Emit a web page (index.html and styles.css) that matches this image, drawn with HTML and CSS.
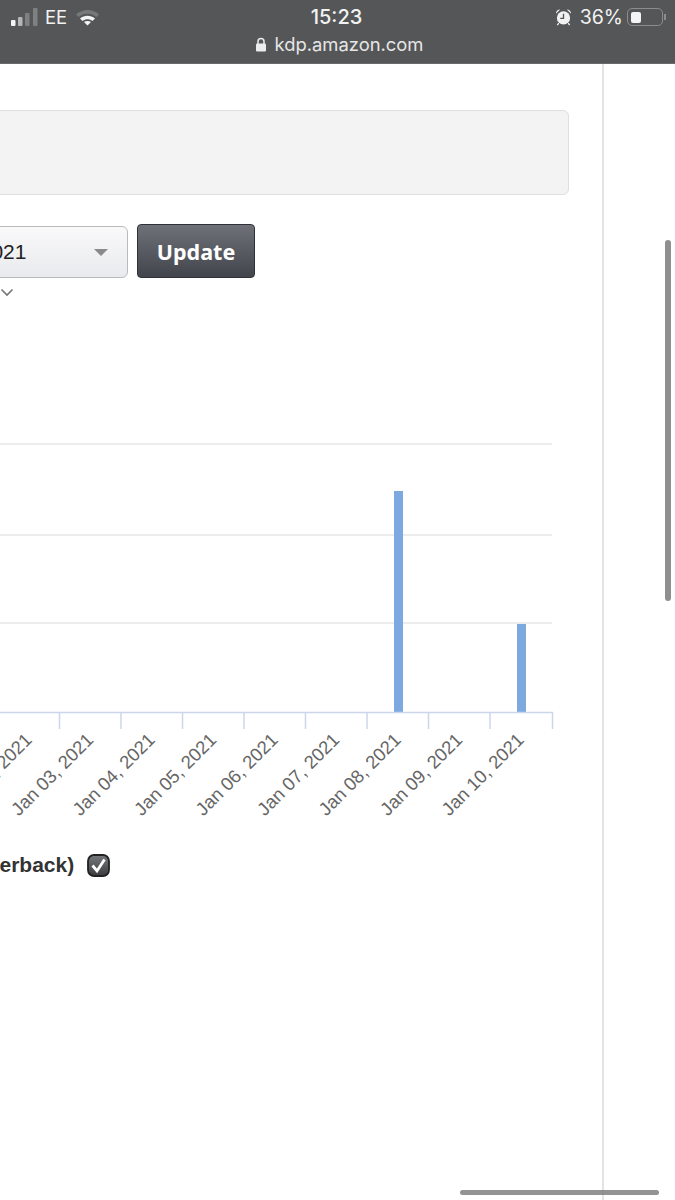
FILE: index.html
```html
<!DOCTYPE html>
<html lang="en">
<head>
  <meta charset="UTF-8">
  <title>kdp.amazon.com</title>
  <link rel="stylesheet" href="styles.css">
</head>
<body>
  <header class="status-bar">
    <div class="status-row">
      <div class="status-left">
        <svg class="signal" width="29" height="18" viewBox="0 0 29 18">
          <rect x="1" y="12" width="4.500" height="6" rx="1" fill="#f4f4f4"/>
          <rect x="8" y="9" width="4.500" height="9" rx="1" fill="#b5b6b7"/>
          <rect x="15" y="5" width="4.500" height="13" rx="1" fill="#7f8082"/>
          <rect x="23" y="0" width="4.500" height="18" rx="1" fill="#7f8082"/>
        </svg>
        <span class="carrier">EE</span>
        <svg class="wifi" width="25" height="18" viewBox="0 0 25 18">
          <path d="M1 6.500C7.500 0.500 17.500 0.500 24 6.500L21.500 9C16.500 4.500 8.500 4.500 3.500 9Z" fill="#77787a"/>
          <path d="M5 10.500C9.500 6.700 15.500 6.700 20 10.500L17.500 13C14.300 10.500 10.700 10.500 7.500 13Z" fill="#f4f4f4"/>
          <path d="M9 14C11 12.500 14 12.500 16 14L12.500 17.500Z" fill="#f4f4f4"/>
        </svg>
      </div>
      <div class="clock">15:23</div>
      <div class="status-right">
        <svg class="alarm" width="17" height="18" viewBox="0 0 18 18">
          <circle cx="9" cy="10" r="7" fill="#f2f2f2"/>
          <path d="M1 5.500C1 2.500 3 1 5.500 1Z M17 5.500C17 2.500 15 1 12.500 1Z" fill="#f2f2f2"/>
          <path d="M9 5.500V10.500H5.500" fill="none" stroke="#555" stroke-width="1.400"/>
          <path d="M4 15.500L2.500 17.500M14 15.500L15.500 17.500" stroke="#f2f2f2" stroke-width="1.400"/>
        </svg>
        <span class="battery-text">36%</span>
        <div class="battery">
          <div class="battery-level"></div>
        </div>
        <div class="battery-cap"></div>
      </div>
    </div>
    <div class="url-row">
      <svg class="lock" width="12" height="15" viewBox="0 0 12 15">
        <path d="M3 7V4.500a3 3 0 0 1 6 0V7" fill="none" stroke="#ececec" stroke-width="1.500"/>
        <rect x="1" y="6.500" width="10" height="8" rx="1.300" fill="#ececec"/>
      </svg>
      <span>kdp.amazon.com</span>
    </div>
  </header>

  <div class="page">
    <main class="content">
      <div class="filter-panel"></div>

      <div class="filter-row">
        <div class="date-select">
          <span>Jan 10, 2021</span>
          <i class="select-arrow"></i>
        </div>
        <button class="update-btn">Update</button>
      </div>

      <svg class="chevron" width="14" height="9" viewBox="0 0 14 9">
        <path d="M1.500 1.500L7 7L12.500 1.500" fill="none" stroke="#777" stroke-width="1.600"/>
      </svg>

      <svg class="chart" width="602" height="400" viewBox="0 430 602 400">
        <g class="grid">
          <line x1="0" y1="444" x2="552" y2="444"/>
          <line x1="0" y1="535" x2="552" y2="535"/>
          <line x1="0" y1="623" x2="552" y2="623"/>
        </g>
        <rect class="bar" x="394" y="491" width="9" height="221"/>
        <rect class="bar" x="517" y="624" width="9" height="88"/>
        <g class="axis">
          <line x1="0" y1="712.500" x2="553" y2="712.500"/>
          <line x1="59.500" y1="712" x2="59.500" y2="729"/>
          <line x1="121" y1="712" x2="121" y2="729"/>
          <line x1="182.500" y1="712" x2="182.500" y2="729"/>
          <line x1="244" y1="712" x2="244" y2="729"/>
          <line x1="305.500" y1="712" x2="305.500" y2="729"/>
          <line x1="367" y1="712" x2="367" y2="729"/>
          <line x1="428.500" y1="712" x2="428.500" y2="729"/>
          <line x1="490" y1="712" x2="490" y2="729"/>
          <line x1="552.500" y1="712" x2="552.500" y2="729"/>
        </g>
        <g class="tick-labels">
          <text transform="rotate(-45 33 741)" x="33" y="741">Jan 02, 2021</text>
          <text transform="rotate(-45 94.500 741)" x="94.500" y="741">Jan 03, 2021</text>
          <text transform="rotate(-45 156 741)" x="156" y="741">Jan 04, 2021</text>
          <text transform="rotate(-45 217.500 741)" x="217.500" y="741">Jan 05, 2021</text>
          <text transform="rotate(-45 279 741)" x="279" y="741">Jan 06, 2021</text>
          <text transform="rotate(-45 340.500 741)" x="340.500" y="741">Jan 07, 2021</text>
          <text transform="rotate(-45 402 741)" x="402" y="741">Jan 08, 2021</text>
          <text transform="rotate(-45 463.500 741)" x="463.500" y="741">Jan 09, 2021</text>
          <text transform="rotate(-45 525 741)" x="525" y="741">Jan 10, 2021</text>
        </g>
      </svg>

      <div class="legend">
        <span>(Paperback)</span>
        <svg class="check" width="23" height="23" viewBox="0 0 23 23">
          <defs>
            <linearGradient id="checkFill" x1="0" y1="0" x2="0" y2="1">
              <stop offset="0" stop-color="#77797c"/>
              <stop offset="1" stop-color="#3a3c3f"/>
            </linearGradient>
          </defs>
          <rect x="1" y="1" width="21" height="21" rx="6" fill="url(#checkFill)" stroke="#222" stroke-width="1.800"/>
          <path d="M5.500 11.500L10 17L17.500 5.500" fill="none" stroke="#fff" stroke-width="2.800"/>
        </svg>
      </div>
    </main>
    <aside class="side"></aside>
  </div>

  <div class="scroll-v"></div>
  <div class="scroll-h"></div>
</body>
</html>
```

FILE: styles.css
```css
html, body {
  margin: 0;
  padding: 0;
  height: 1200px;
  overflow: hidden;
  background: #fff;
  font-family: "Liberation Sans", Arial, sans-serif;
}

body {
  position: relative;
  display: flex;
  flex-direction: column;
}

/* Phone status bar */
.status-bar {
  height: 63px;
  flex: none;
  background: #555657;
  border-bottom: 1px solid #6a6a6a;
  color: #f2f2f2;
  font-family: Inter, "Liberation Sans", sans-serif;
}

.status-row {
  display: grid;
  grid-template-columns: 1fr auto 1fr;
  align-items: center;
  height: 34px;
  padding: 0 9px 0 7px;
}

.status-left {
  display: flex;
  align-items: center;
  padding-left: 3px;
}

.carrier {
  font-size: 18.500px;
  margin-left: 6px;
}

.wifi {
  margin-left: 8px;
}

.clock {
  font-size: 20px;
  font-weight: 500;
}

.status-right {
  display: flex;
  align-items: center;
  justify-content: flex-end;
}

.battery-text {
  font-size: 19.500px;
  margin-left: 8px;
}

.battery {
  width: 36px;
  height: 18px;
  margin-left: 4px;
  padding: 2.500px;
  border: 1.500px solid #8c8c8c;
  border-radius: 5px;
  box-sizing: border-box;
  display: flex;
}

.battery-level {
  width: 10px;
  background: #f4f4f4;
  border-radius: 2px;
}

.battery-cap {
  width: 2px;
  height: 6px;
  margin-left: 1px;
  background: #8c8c8c;
}

.url-row {
  display: flex;
  align-items: center;
  justify-content: center;
  gap: 8px;
  height: 20px;
  padding-left: 3px;
  font-size: 18.400px;
  color: #e6e6e6;
}

/* Page */
.page {
  flex: 1;
  display: flex;
}

.content {
  width: 602px;
  flex: none;
  border-right: 2px solid #e3e3e3;
}

.filter-panel {
  height: 83px;
  width: 587px;
  margin: 46px 0 0 -20px;
  background: #f3f3f3;
  border: 1.500px solid #dfdfdf;
  border-radius: 6px;
}

.filter-row {
  display: flex;
  align-items: flex-end;
  margin: 29px 0 0 -105px;
}

.date-select {
  width: 233px;
  height: 52px;
  box-sizing: border-box;
  display: flex;
  align-items: center;
  justify-content: space-between;
  padding: 0 19px 0 9px;
  background: linear-gradient(#f9f9fa, #e9eaed);
  border: 1.500px solid #b9babc;
  border-radius: 6px;
  font-size: 21px;
  color: #222;
}

.select-arrow {
  width: 0;
  height: 0;
  border-left: 7px solid transparent;
  border-right: 7px solid transparent;
  border-top: 7px solid #8a8a8a;
}

.update-btn {
  width: 118px;
  height: 54px;
  margin-left: 9px;
  padding: 0;
  background: linear-gradient(#6e7177, #42454c);
  border: 1px solid #2f3237;
  border-radius: 4px;
  color: #fff;
  font-family: "Noto Sans", "Open Sans", sans-serif;
  font-size: 21.500px;
  font-weight: 700;
}

.chevron {
  display: block;
  margin: 10px 0 0 0;
}

.chart {
  display: block;
  margin-top: 133px;
}

.grid line {
  stroke: #e6e6e6;
  stroke-width: 1.500;
}

.bar {
  fill: #7ca9e0;
}

.axis line {
  stroke: #ccd6eb;
  stroke-width: 1.500;
}

.tick-labels text {
  font-size: 18.500px;
  fill: #666;
  text-anchor: end;
}

.legend {
  display: flex;
  align-items: center;
  gap: 13px;
  margin: 22px 0 0 -46px;
  height: 26px;
  font-size: 21px;
  font-weight: 700;
  color: #333;
}

.check {
  flex: none;
}

.side {
  flex: 1;
}

/* Overlay scrollbars */
.scroll-v {
  position: absolute;
  left: 665px;
  top: 240px;
  width: 6px;
  height: 361px;
  background: #8f8f8f;
  border-radius: 3px;
}

.scroll-h {
  position: absolute;
  left: 460px;
  top: 1190px;
  width: 199px;
  height: 5px;
  background: rgba(120, 120, 120, 0.8);
  border-radius: 3px;
}
```
